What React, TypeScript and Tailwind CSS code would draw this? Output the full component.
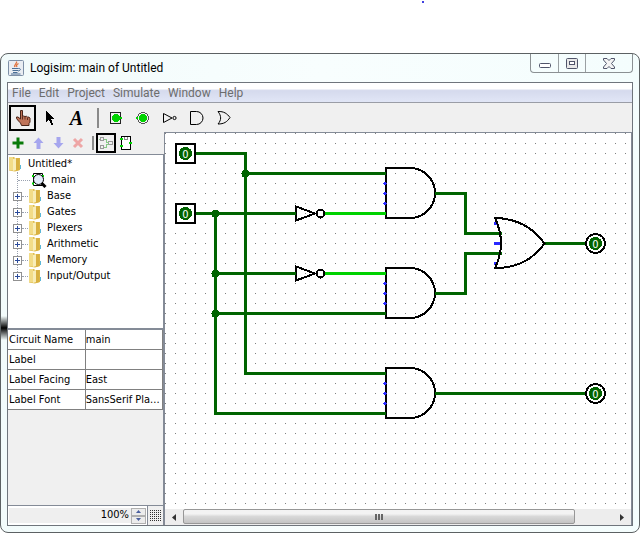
import { useState, type ReactNode } from 'react'

const WIRE = '#006400'
const LIVE = '#00d200'
const FLOAT = '#2a2aff'

const menus = ['File', 'Edit', 'Project', 'Simulate', 'Window', 'Help']
const libraries = ['Base', 'Gates', 'Plexers', 'Arithmetic', 'Memory', 'Input/Output']
const attributes = [
  { name: 'Circuit Name', value: 'main' },
  { name: 'Label', value: '' },
  { name: 'Label Facing', value: 'East' },
  { name: 'Label Font', value: 'SansSerif Pla...' },
]

// ---- icons ----

function JavaIcon() {
  return (
    <svg width="16" height="16" viewBox="0 0 16 16" fill="none">
      <rect x="0.5" y="0.5" width="15" height="15" rx="1" fill="#e9edf2" stroke="#7d8fa6" />
      <path d="M8.500 1.500c1 2-3 3-1.500 5.500M10.500 3.500c-2 1-2.500 2-1.500 3.500" stroke="#e0703a" strokeWidth="1.300" />
      <path d="M4 8.500h6.500M4.500 10.500h5.500M5 12.500h4.500M10.500 8.500c3-.5 2 2.500-.5 2.500M3 14h9.500" stroke="#4a6f96" />
    </svg>
  )
}

function HandIcon() {
  return (
    <svg width="18" height="18" viewBox="0 0 18 18">
      <path
        d="M6.500 1.500h2v6l1-.5 1.500.5 1.500-.2 1 .8 1.500 0 1 1v4l-1 1.500v1.900h-7.500l-1-2.500-2-2-2-2.500v-1.500h1.500l2.500 2z"
        fill="#bf7358" stroke="#4a2418" strokeWidth="1"
      />
      <path d="M8.500 7.500v3M11 8v2.500M13.500 9v2" stroke="#5e3020" strokeWidth="1" />
    </svg>
  )
}

function ArrowIcon() {
  return (
    <svg width="12" height="16" viewBox="0 0 12 16" shapeRendering="crispEdges">
      <path d="M2 1v11l3-2.500 2 5h2l-2-5.500h3.500z" fill="#000" />
    </svg>
  )
}

function PinIcon({ round }: { round?: boolean }) {
  return (
    <svg width="14" height="14" viewBox="0 0 14 14" shapeRendering="crispEdges">
      {round
        ? <circle cx="7" cy="7" r="5.500" fill="none" stroke="#555" />
        : <rect x="1.500" y="1.500" width="10" height="11" fill="none" stroke="#222" />}
      <circle cx="7" cy="7" r="4.300" fill={LIVE} />
      <rect x={round ? 0 : 11} y="6" width="2" height="2" fill={LIVE} />
    </svg>
  )
}

function NotIcon() {
  return (
    <svg width="16" height="12" viewBox="0 0 16 12" fill="none" stroke="#000">
      <path d="M1.500 1.500v9l8.500-4.500z" />
      <circle cx="12.500" cy="6" r="1.600" />
    </svg>
  )
}

function AndIcon() {
  return (
    <svg width="14" height="14" viewBox="0 0 14 14" fill="none" stroke="#000">
      <path d="M0.500 0.500h6a6 6 0 0 1 0 13h-6z" />
    </svg>
  )
}

function OrIcon() {
  return (
    <svg width="14" height="14" viewBox="0 0 14 14" fill="none" stroke="#000">
      <path d="M1 0.500c6-.2 9 2 12 6-3 4.500-6 6.500-12 6.500 3.500-4 3.500-8 0-12.500z" />
    </svg>
  )
}

function PlusIcon() {
  return (
    <svg width="12" height="12" viewBox="0 0 12 12">
      <path d="M4.500 0.500h3v4h4v3h-4v4h-3v-4h-4v-3h4z" fill="#087a08" />
    </svg>
  )
}

function MoveIcon({ down }: { down?: boolean }) {
  return (
    <svg width="11" height="12" viewBox="0 0 11 12">
      <path
        d={down ? 'M3.500 0h4v6h3l-5 5.500-5-5.500h3z' : 'M5.500 0.500l5 5.500h-3v6h-4v-6h-3z'}
        fill="#a6a6ee"
      />
    </svg>
  )
}

function DeleteIcon() {
  return (
    <svg width="12" height="12" viewBox="0 0 12 12">
      <path d="M2 2l8 8M10 2l-8 8" stroke="#eea6a6" strokeWidth="3" />
    </svg>
  )
}

function LayoutIcon() {
  return (
    <svg width="14" height="14" viewBox="0 0 14 14" fill="none" stroke="#999" shapeRendering="crispEdges">
      <path d="M1.500 1.500h3v3h-3zM1.500 9.500h3v3h-3zM9.500 5.500h4v3h-4z" />
      <path d="M5 3.500h2.500v3h2M5 11.500h2.500v-3h2M0 3h1" stroke="#86c986" />
    </svg>
  )
}

function AppearanceIcon() {
  return (
    <svg width="14" height="16" viewBox="0 0 14 16" fill="none" shapeRendering="crispEdges">
      <path d="M2.500 1.500h9v13h-9z" stroke="#000" fill="#fff" />
      <path d="M5.500 2v2h3v-2" stroke="#888" />
      <path d="M1 4h3M1 11h3M10 8h3" stroke={LIVE} strokeWidth="2" />
    </svg>
  )
}

function FolderIcon() {
  return (
    <svg width="14" height="16" viewBox="0 0 14 16">
      <path d="M1 1h5l1 1h5v12l-5 1.500-6-1z" fill="#dfbb4c" />
      <path d="M1 1h4v13.500l-4-.5z" fill="#f2dc88" />
      <path d="M5 3l3-1v12l-3 1z" fill="#f8edb8" />
      <path d="M8 2.500l3.500-.5v12l-3.500 1z" fill="#d8b040" />
      <path d="M12.500 9v4" stroke="#5bb7d8" />
    </svg>
  )
}

function CircuitIcon() {
  return (
    <svg width="16" height="16" viewBox="0 0 16 16" fill="none">
      <path d="M2.500 1.500h9v12h-9z" stroke="#000" fill="#fff" />
      <path d="M1 4h2M1 11.500h2M11 4h2" stroke={LIVE} strokeWidth="2" />
      <circle cx="7.500" cy="7.500" r="5" fill="#e4ecfb" stroke="#000" />
      <path d="M10.500 11l4 4" stroke="#000" strokeWidth="3" />
    </svg>
  )
}

// ---- circuit, in grid units of one pixel ----

function Digit({ x, y }: { x: number; y: number }) {
  return (
    <>
      <circle cx={x} cy={y} r="6.500" fill={WIRE} />
      <text x={x} y={y + 4} textAnchor="middle" fontSize="11" fill="#fff" className="font-['DejaVu_Sans_Condensed','Noto_Sans',sans-serif]">0</text>
    </>
  )
}

function InputPin({ x, y }: { x: number; y: number }) {
  return (
    <g>
      <rect x={x - 9.5} y={y - 9.5} width="19" height="19" fill="#fff" stroke="#000" strokeWidth="2" />
      <Digit x={x} y={y} />
    </g>
  )
}

function OutputPin({ x, y }: { x: number; y: number }) {
  return (
    <g>
      <circle cx={x} cy={y} r="9.500" fill="#fff" stroke="#000" strokeWidth="2" />
      <Digit x={x} y={y} />
    </g>
  )
}

function AndGate({ x, y }: { x: number; y: number }) {
  return (
    <g>
      <path d={`M${x + 0.5} ${y - 25.5}h24a25 25 0 0 1 0 50h-24z`} fill="none" stroke="#000" strokeWidth="2" />
      {[-10, 0, 10].map(d => (
        <path key={d} d={`M${x - 2.5} ${y + d - 0.5}h4v1h-4zM${x - 1.5} ${y + d - 1.5}h2v3h-2z`} fill={FLOAT} />
      ))}
    </g>
  )
}

function NotGate({ x, y }: { x: number; y: number }) {
  return (
    <g fill="none" stroke="#000" strokeWidth="2">
      <path d={`M${x + 0.5} ${y - 7}v14l19-7z`} />
      <circle cx={x + 25} cy={y} r="4" />
    </g>
  )
}

function Circuit() {
  const wires = [
    'M30 20H80V240H220',
    'M80 40H220',
    'M30 80H130',
    'M50 80V280H220',
    'M50 140H130',
    'M50 180H220',
    'M269 60H300V100H336',
    'M269 160H300V120H336',
    'M379 110H421',
    'M269 260H421',
  ]
  const junctions = [[80, 40], [50, 80], [50, 140], [50, 180]]

  return (
    <svg className="block h-full w-full" aria-label="Circuit canvas">
      <defs>
        <pattern id="grid" width="10" height="10" patternUnits="userSpaceOnUse">
          <rect width="1" height="1" fill="#808080" />
        </pattern>
      </defs>
      <rect width="100%" height="100%" fill="url(#grid)" />
      <g transform="translate(0.5 0.5)" shapeRendering="crispEdges">
        <NotGate x={130} y={80} />
        <NotGate x={130} y={140} />
        <AndGate x={220} y={60} />
        <AndGate x={220} y={160} />
        <AndGate x={220} y={260} />
        <g fill="none" strokeWidth="3">
          {wires.map(d => <path key={d} d={d} stroke={WIRE} />)}
          <path d="M159 80H220M159 140H220" stroke={LIVE} />
        </g>
        {junctions.map(([x, y]) => <circle key={`${x}-${y}`} cx={x} cy={y} r="4" fill={WIRE} />)}
        <path d="M328.500 110h8M328.500 90h4M328.500 130h4" stroke={FLOAT} strokeWidth="3" />
        <path d="M329.500 84.500Q361 85 379 110Q361 135 329.500 134.500Q341.500 110 329.500 84.500z" fill="none" stroke="#000" strokeWidth="2" />
        <InputPin x={20} y={20} />
        <InputPin x={20} y={80} />
        <OutputPin x={430} y={110} />
        <OutputPin x={430} y={260} />
      </g>
    </svg>
  )
}

// ---- chrome ----

function Tool({ label, active, small, children }: { label: string; active?: boolean; small?: boolean; children: ReactNode }) {
  return (
    <button
      aria-label={label}
      className={`flex shrink-0 items-center justify-center ${small ? 'h-5 w-5' : 'h-[26px] w-[27px]'} ${active ? 'border-2 border-black' : ''}`}
    >
      {children}
    </button>
  )
}

function Explorer() {
  return (
    <ul className="h-[174px] border-t border-[#848b97] bg-white pt-px leading-4">
      <li>
        <div className="flex h-4 items-center gap-[6px]">
          <FolderIcon /> Untitled*
        </div>
        <ul className="relative">
          <li className="absolute top-0 left-[9px] h-[104px] border-l border-dotted border-gray-400" aria-hidden="true" />
          <li className="flex h-4 items-center pl-[10px]">
            <span className="w-3 border-t border-dotted border-gray-400" />
            <span className="mr-1 ml-px"><CircuitIcon /></span>
            main
          </li>
          {libraries.map(name => (
            <li key={name} className="flex h-4 items-center pl-[5px]">
              <button aria-label={`Expand ${name}`} className="relative h-[9px] w-[9px] shrink-0 border border-[#919191] bg-white">
                <svg className="block" width="7" height="7" viewBox="0 0 7 7" stroke="#2b4b9b" shapeRendering="crispEdges">
                  <path d="M1 3.500h5M3.500 1v5" />
                </svg>
              </button>
              <span className="w-[6px] border-t border-dotted border-gray-400" />
              <span className="mr-[5px]"><FolderIcon /></span>
              {name}
            </li>
          ))}
        </ul>
      </li>
    </ul>
  )
}

function AttributeTable() {
  return (
    <table className="w-full table-fixed border-collapse border-t-2 border-[#848b97] bg-white">
      <tbody>
        {attributes.map(a => (
          <tr key={a.name} className="h-5 border-b border-[#808080] leading-4">
            <th scope="row" className="border-r border-[#808080] p-0 pt-px pl-px text-left font-normal whitespace-nowrap">{a.name}</th>
            <td className="border-r border-[#808080] p-0 pt-px whitespace-nowrap">{a.value}</td>
          </tr>
        ))}
      </tbody>
    </table>
  )
}

function ZoomBar() {
  const [zoom, setZoom] = useState(100)
  return (
    <div className="flex h-5 items-center border-t border-[#848b97] bg-[#f0f0f0]">
      <div className="flex h-full min-w-0 flex-1 items-center border-r border-[#848b97] bg-white p-px">
        <input
          aria-label="Zoom"
          className="h-[15px] min-w-0 flex-1 bg-[#efefef] pr-0.5 text-right outline-none"
          value={`${zoom}%`}
          readOnly
        />
        <div className="flex flex-col">
          <button aria-label="Zoom in" onClick={() => setZoom(zoom + 10)} className="flex h-2 w-[15px] items-center justify-center border border-[#b0b0b0] bg-[#ececec]">
            <svg width="5" height="3" viewBox="0 0 5 3"><path d="M0 3L2.500 0 5 3z" fill="#4a5f9e" /></svg>
          </button>
          <button aria-label="Zoom out" onClick={() => setZoom(zoom - 10)} className="flex h-2 w-[15px] items-center justify-center border border-[#b0b0b0] bg-[#ececec]">
            <svg width="5" height="3" viewBox="0 0 5 3"><path d="M0 0h5L2.500 3z" fill="#4a5f9e" /></svg>
          </button>
        </div>
      </div>
      <button aria-label="Toggle grid" className="flex w-[15px] justify-center">
        <svg width="11" height="11" shapeRendering="crispEdges">
          {[0, 2, 4, 6, 8, 10].map(y => <path key={y} d={`M0 ${y + 0.5}h11`} stroke="#333" strokeDasharray="1 1" />)}
        </svg>
      </button>
    </div>
  )
}

function ScrollBar() {
  return (
    <div className="flex h-4 bg-[#ededed]">
      <button aria-label="Scroll left" className="flex w-[18px] items-center justify-center">
        <svg width="4" height="7" viewBox="0 0 4 7"><path d="M4 0v7L0 3.500z" fill="#333" /></svg>
      </button>
      <div className="flex h-[15px] flex-[392] items-center justify-center gap-px rounded-xs border border-[#979797] bg-linear-to-b from-[#f3f3f3] from-30% via-[#d8d8d8] via-50% to-[#c4c4c4]">
        <span className="h-[6px] w-0.5 bg-[#666]" />
        <span className="h-[6px] w-0.5 bg-[#666]" />
        <span className="h-[6px] w-0.5 bg-[#666]" />
      </div>
      <div className="flex-[38]" />
      <button aria-label="Scroll right" className="flex w-[18px] items-center justify-center">
        <svg width="4" height="7" viewBox="0 0 4 7"><path d="M0 0v7l4-3.500z" fill="#333" /></svg>
      </button>
    </div>
  )
}

function TitleBar() {
  return (
    <header className="flex h-7 items-start pl-px">
      <div className="flex h-7 flex-1 items-center gap-[6px] text-black">
        <JavaIcon />
        <h1 className="font-[Roboto,'Noto_Sans',sans-serif] text-xs">Logisim: main of Untitled</h1>
      </div>
      <div className="flex h-[19px] divide-x divide-[#9aa0a3] rounded-b-[4px] border border-t-0 border-[#8b9093]">
        <button aria-label="Minimize" className="flex w-7 items-center justify-center pt-1">
          <svg width="12" height="5"><rect x="0.500" y="0.500" width="11" height="4" rx="1" fill="#fff" stroke="#50546a" /></svg>
        </button>
        <button aria-label="Maximize" className="flex w-[27px] items-center justify-center">
          <svg width="12" height="11" fill="#e8e8e8" stroke="#50546a">
            <rect x="0.500" y="0.500" width="11" height="10" rx="1" />
            <rect x="3.500" y="3.500" width="5" height="3" fill="#fff" />
          </svg>
        </button>
        <button aria-label="Close" className="flex w-[46px] items-center justify-center">
          <svg width="12" height="11" viewBox="0 0 12 11">
            <path d="M0.500 0.500h3.500l2 2 2-2h3.500v1.500l-3 3.500 3 3.500v1.500h-3.500l-2-2-2 2h-3.500v-1.500l3-3.500-3-3.500z" fill="#f4f4f4" stroke="#50546a" />
          </svg>
        </button>
      </div>
    </header>
  )
}

export default function App() {
  return (
    <div className="relative flex min-h-screen flex-col bg-white pt-[53px] font-['DejaVu_Sans_Condensed','Noto_Sans',sans-serif] text-[11px] text-black">
      <span className="absolute top-px left-[422px] h-0.5 w-0.5 bg-[#4040e0]" />

      <div className="relative flex flex-1 flex-col rounded-lg border border-[#5c6163] bg-linear-to-r from-[#f2fbfb] via-[#f8fefe] to-[#f4fdfd] px-[6px] pb-[6px]">
        <span className="absolute top-[262px] left-0 h-6 w-[6px] bg-linear-to-b from-transparent via-black to-transparent" />
        <TitleBar />

        <div className="flex flex-1 flex-col border border-[#6f757c] bg-[#f0f0f0]">
          <nav className="flex h-5 items-center gap-2 border-b border-[#9a9da6] bg-linear-to-b from-white from-30% via-[#d5daed] via-40% to-[#e1e6f6] pl-1 font-[Roboto,'Noto_Sans',sans-serif] text-xs text-[#6d6d6d]">
            {menus.map(m => <button key={m}>{m}</button>)}
          </nav>

          <div className="flex h-[29px] items-center pl-px">
            <Tool label="Poke" active><HandIcon /></Tool>
            <Tool label="Select"><ArrowIcon /></Tool>
            <Tool label="Text"><span className="font-['Liberation_Serif',serif] text-xl font-bold italic">A</span></Tool>
            <span className="mr-[3px] ml-[7px] h-5 w-0.5 bg-[#8a8a8a]" />
            <Tool label="Input pin"><PinIcon /></Tool>
            <Tool label="Output pin"><PinIcon round /></Tool>
            <Tool label="NOT gate"><NotIcon /></Tool>
            <Tool label="AND gate"><AndIcon /></Tool>
            <Tool label="OR gate"><OrIcon /></Tool>
          </div>

          <div className="flex flex-1">
            <aside className="flex w-[156px] shrink-0 flex-col">
              <div className="flex h-[22px] items-center">
                <Tool small label="Add circuit"><PlusIcon /></Tool>
                <Tool small label="Move up"><MoveIcon /></Tool>
                <Tool small label="Move down"><MoveIcon down /></Tool>
                <Tool small label="Delete"><DeleteIcon /></Tool>
                <span className="mr-0.5 ml-1 h-[14px] w-0.5 bg-[#8a8a8a]" />
                <Tool small active label="Edit layout"><LayoutIcon /></Tool>
                <Tool small label="Edit appearance"><AppearanceIcon /></Tool>
              </div>
              <div className="flex flex-1 flex-col border-r border-[#848b97]">
                <Explorer />
                <AttributeTable />
                <div className="flex-1" />
                <ZoomBar />
              </div>
            </aside>

            <main className="flex min-w-0 flex-1 flex-col border-t border-r border-l border-[#848b97] bg-white">
              <div className="min-h-[375px] flex-1"><Circuit /></div>
              <ScrollBar />
            </main>
          </div>
        </div>
      </div>
    </div>
  )
}
